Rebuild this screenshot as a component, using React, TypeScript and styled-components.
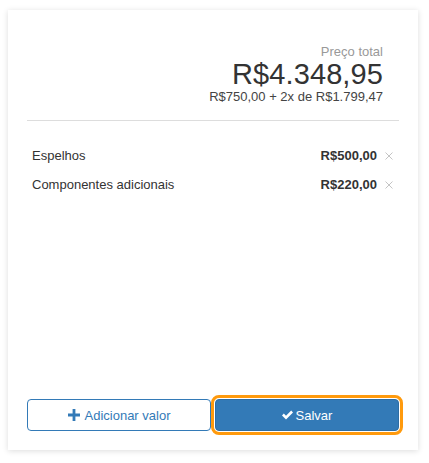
import styled, { createGlobalStyle } from "styled-components";

const GlobalStyle = createGlobalStyle`
  body {
    margin: 0;
    background: #fff;
    font-family: "Liberation Sans", Arial, sans-serif;
  }
`;

const Page = styled.div`
  padding: 10px 11px 13px 8px;
`;

const Card = styled.div`
  height: 440px;
  box-sizing: border-box;
  background: #fff;
  box-shadow: 0 1px 6px rgba(0, 0, 0, 0.14);
  padding: 35px 19px 19px;
  display: flex;
  flex-direction: column;
`;

const Summary = styled.div`
  display: flex;
  flex-direction: column;
  align-items: flex-end;
  padding-right: 16px;
  padding-bottom: 17px;
  border-bottom: 1px solid #ddd;
`;

const Label = styled.div`
  font-size: 13px;
  line-height: 13px;
  color: #999;
`;

const Total = styled.div`
  font-size: 29px;
  line-height: 32px;
  color: #333;
  letter-spacing: 0.1px;
`;

const Installments = styled.div`
  font-size: 13px;
  line-height: 13px;
  color: #444;
`;

const List = styled.div`
  padding: 20px 6px 0 5px;
`;

const Row = styled.div`
  display: flex;
  align-items: center;
  height: 29px;
  font-size: 13px;
  line-height: 29px;
  color: #333;
`;

const Name = styled.span`
  flex: 1;
`;

const Price = styled.span`
  font-weight: bold;
  margin-right: 8px;
`;

const Remove = styled.button`
  border: 0;
  padding: 0;
  background: none;
  display: flex;
  cursor: pointer;
`;

const Actions = styled.div`
  margin-top: auto;
  display: grid;
  grid-template-columns: 1fr 1fr;
  gap: 4px;
`;

const Button = styled.button<{ $primary?: boolean }>`
  height: 32px;
  box-sizing: border-box;
  border-radius: 4px;
  border: 1px solid ${(p) => (p.$primary ? "#2e6da4" : "#337ab7")};
  background: ${(p) => (p.$primary ? "#337ab7" : "#fff")};
  color: ${(p) => (p.$primary ? "#fff" : "#337ab7")};
  font-family: inherit;
  font-size: 13px;
  display: flex;
  align-items: center;
  justify-content: center;
  gap: ${(p) => (p.$primary ? "3px" : "5px")};
  cursor: pointer;
  ${(p) => p.$primary && "outline: 3px solid #ff9a0d; outline-offset: 1px;"}
`;

const items = [
  { name: "Espelhos", price: "R$500,00" },
  { name: "Componentes adicionais", price: "R$220,00" },
];

const CloseIcon = () => (
  <svg width="8" height="8" viewBox="0 0 8 8">
    <path d="M0.5 0.5L7.5 7.5M7.5 0.5L0.5 7.5" stroke="#c4c4c4" strokeWidth="1" />
  </svg>
);

const PlusIcon = () => (
  <svg width="12" height="12" viewBox="0 0 12 12">
    <path d="M4.6 0h2.8v4.6H12v2.8H7.4V12H4.6V7.4H0V4.6h4.6z" fill="#337ab7" />
  </svg>
);

const CheckIcon = () => (
  <svg width="11" height="10" viewBox="0 0 11 10">
    <path d="M0 5.4l1.8-1.8 2.2 2.2L9.2 0.6 11 2.4 4 9.4z" fill="#fff" />
  </svg>
);

const App = () => (
  <>
    <GlobalStyle />
    <Page>
      <Card>
        <Summary>
          <Label>Preço total</Label>
          <Total>R$4.348,95</Total>
          <Installments>R$750,00 + 2x de R$1.799,47</Installments>
        </Summary>
        <List>
          {items.map((item) => (
            <Row key={item.name}>
              <Name>{item.name}</Name>
              <Price>{item.price}</Price>
              <Remove aria-label="Remover">
                <CloseIcon />
              </Remove>
            </Row>
          ))}
        </List>
        <Actions>
          <Button>
            <PlusIcon />
            Adicionar valor
          </Button>
          <Button $primary>
            <CheckIcon />
            Salvar
          </Button>
        </Actions>
      </Card>
    </Page>
  </>
);

export default App;
